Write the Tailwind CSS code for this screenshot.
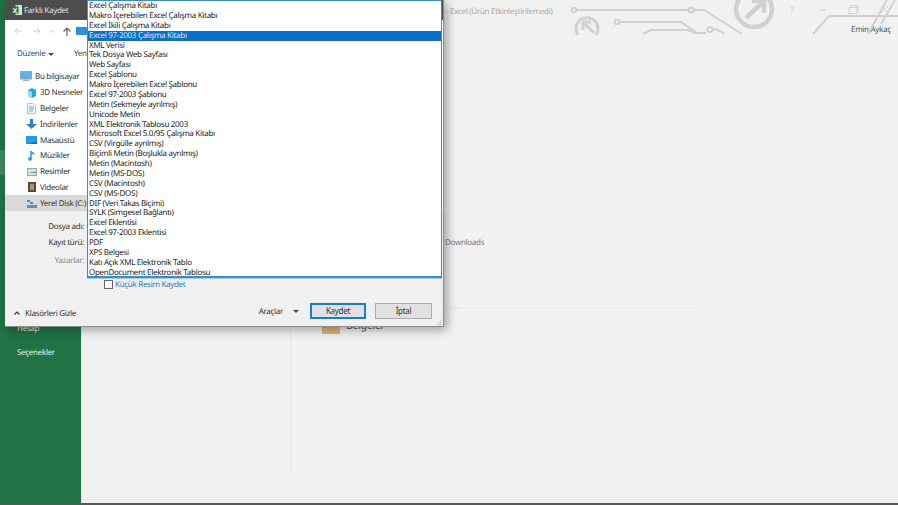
<!DOCTYPE html>
<html lang="tr">
<head>
<meta charset="utf-8">
<script src="https://cdn.jsdelivr.net/npm/@tailwindcss/browser@4"></script>
<title>Farklı Kaydet</title>
</head>
<body class="m-0 overflow-hidden bg-[#f1f1f1] font-['Noto_Sans',sans-serif] text-[8px] tracking-[-0.3px] [text-rendering:geometricPrecision]">
<div class="relative flex flex-col w-[898px] h-[505px] overflow-hidden">
  <div class="flex flex-1 min-h-0">
    <aside class="relative flex flex-col w-[81px] bg-[#217346] text-[#e6efe9] shrink-0">
      <div class="mt-[150px] h-[25px] w-full bg-[#3f8a5e]"></div>
      <div class="mt-[148px] pl-[17px] leading-[12px]">Hesap</div>
      <div class="mt-[12px] pl-[17px] leading-[12px]">Seçenekler</div>
    </aside>
    <main class="relative flex-1 flex flex-col min-w-0 border-l border-[#e6e6e6]">
      <div class="flex h-[60px] items-start">
        <span class="ml-[364px] mt-[6px] leading-[12px] text-[#a9a9a9] whitespace-nowrap">- Excel (Ürün Etkinleştirilemedi)</span>
        <span class="absolute left-[769px] top-[24px] leading-[12px] text-[#555] whitespace-nowrap">Emin Aykaç</span>
      </div>
      <div class="ml-[363px] mt-[176px] pt-[1px] leading-[12px] text-[#7a7a7a]">Downloads</div>
      <div class="flex flex-1 min-h-0">
        <div class="ml-[208px] mt-[59px] w-px h-[168px] bg-[#e8e8e8]"></div>
        <div class="flex flex-col w-[406px] mt-[59px]">
          <div class="h-px w-full bg-[#e8e8e8]"></div>
          <div class="flex items-start gap-[6px] mt-[17px] ml-[31px]">
            <div class="w-[18px] h-[8px] bg-[#dcb877]"></div>
            <span class="text-[10.5px] leading-[14px] text-[#555] -mt-[7px]">Belgeler</span>
          </div>
        </div>
      </div>
    </main>
    <svg class="absolute left-0 top-0 pointer-events-none" width="898" height="60" viewBox="0 0 898 60" fill="none" stroke="#d0d0d0" stroke-width="2">
      <circle cx="574" cy="10" r="2.3"/>
      <path d="M577 10H704L742 34"/>
      <circle cx="691" cy="10" r="2.6" fill="#f1f1f1"/>
      <circle cx="617" cy="22" r="2.3"/>
      <path d="M620 22H681L697 33"/>
      <path d="M643 34L651 30H688L694 33H706"/>
      <circle cx="710" cy="29.5" r="2.6" fill="#f1f1f1"/>
      <path d="M713 29.5H717L725 34"/>
      <path d="M578 35A11 11 0 1 1 596 35" stroke-width="3"/>
      <path d="M583 22L594 33M583 22V30M583 22H591" stroke-width="3"/>
      <circle cx="754" cy="9" r="18" stroke-width="4.5"/>
      <path d="M746 18L763 2M752 1H764V13" stroke-width="4.5"/>
      <path d="M813 34L829 16H898" stroke-width="2"/>
      <path d="M868 34L887 0M881 24L895 0" stroke-width="2"/>
      <path d="M819 10H826" stroke-width="1"/>
      <path d="M849 7.500H857V13.500H849ZM851 7.500V5.500H858V11.500" stroke-width="1"/>
      <path d="M881 6L888 13M888 6L881 13" stroke-width="1"/>
      <text x="790" y="13" fill="#d0d0d0" stroke="none" font-size="9">?</text>
    </svg>
  </div>
  <div class="h-[2px] bg-[#595959] shrink-0"></div>

  <section class="absolute left-[5px] top-0 w-[439px] h-[327px] flex flex-col bg-[#f0f0f0] border-r border-b border-[#8c8c8c] shadow-[3px_3px_10px_rgba(0,0,0,0.35)] text-[#333]">
    <header class="flex items-center h-[20px] bg-[#4d4d4d] text-[#e0e0e0] shrink-0">
      <svg class="ml-[7px]" width="10" height="10" viewBox="0 0 10 10"><rect width="6.500" height="10" x="3.500" fill="#cfe3d6"/><rect y="1.500" width="6.500" height="7" fill="#217346"/><text x="0.800" y="7.500" font-size="6.500" font-weight="700" fill="#fff">X</text></svg>
      <span class="ml-[2px] pt-[1px]">Farklı Kaydet</span>
    </header>
    <div class="flex items-center h-[22px] bg-white shrink-0 pl-[9px]">
      <svg width="8" height="8" viewBox="0 0 8 8" fill="none" stroke="#cfcfcf" stroke-width="1"><path d="M8 4H1M4 1L1 4L4 7"/></svg>
      <svg class="ml-[11px]" width="8" height="8" viewBox="0 0 8 8" fill="none" stroke="#cfcfcf" stroke-width="1"><path d="M0 4H7M4 1L7 4L4 7"/></svg>
      <svg class="ml-[9px]" width="5" height="3" viewBox="0 0 5 3" fill="none" stroke="#cfcfcf"><path d="M0.500 0.500L2.500 2.500L4.500 0.500"/></svg>
      <svg class="ml-[8px]" width="8" height="9" viewBox="0 0 8 9" fill="none" stroke="#666" stroke-width="1.200"><path d="M4 9V1M0.500 4.500L4 1L7.500 4.500"/></svg>
      <div class="w-[11px] h-[8px] bg-[#2b8fe3] ml-[5px]"></div>
    </div>
    <div class="flex items-center h-[24px] bg-white shrink-0 pl-[12px] text-[#2f4f6f]">
      <span class="w-[29px]">Düzenle</span>
      <svg class="ml-[2px]" width="6" height="3" viewBox="0 0 6 3"><path d="M0 0H6L3 3Z" fill="#2f4f6f"/></svg>
      <span class="ml-[20px]">Yeni</span>
    </div>
    <div class="bg-white h-[145px] shrink-0"></div>
    <div class="absolute left-0 top-[69px] w-[82px] flex flex-col text-[#333] [&>div>span:last-child]:pt-[1px]">
      <div class="flex items-center h-[15.800px] pl-[15px] gap-[3px] whitespace-nowrap"><svg width="12" height="11" viewBox="0 0 12 11"><rect x="0.500" y="0.500" width="11" height="7.500" fill="#5fb4e6" stroke="#8aa9c0"/><rect x="3" y="8.500" width="6" height="1.500" fill="#9fb2bf"/></svg><span>Bu bilgisayar</span></div>
      <div class="flex items-center h-[15.800px] pl-[21px] gap-[3px] whitespace-nowrap"><span class="flex justify-center w-[11px]"><svg width="10" height="10" viewBox="0 0 10 10"><path d="M1 2L5 0L9 2V8L5 10L1 8Z" fill="#29a3dd"/><path d="M1 2L5 4V10L1 8Z" fill="#8fd6f2"/></svg></span><span>3D Nesneler</span></div>
      <div class="flex items-center h-[15.800px] pl-[21px] gap-[3px] whitespace-nowrap"><span class="flex justify-center w-[11px]"><svg width="9" height="11" viewBox="0 0 9 11"><path d="M0.500 0.500H6L8.500 3V10.500H0.500Z" fill="#f4f6f8" stroke="#b4bcc4"/><path d="M2 4H7M2 6H7M2 8H6" stroke="#6fa8d6"/></svg></span><span>Belgeler</span></div>
      <div class="flex items-center h-[15.800px] pl-[21px] gap-[3px] whitespace-nowrap"><span class="flex justify-center w-[11px]"><svg width="11" height="10" viewBox="0 0 11 10"><path d="M4 0H7V5H11L5.500 10L0 5H4Z" fill="#2b7fd6"/></svg></span><span>İndirilenler</span></div>
      <div class="flex items-center h-[15.800px] pl-[21px] gap-[3px] whitespace-nowrap"><span class="flex justify-center w-[11px]"><svg width="11" height="8" viewBox="0 0 11 8"><rect width="11" height="8" fill="#1f9be8"/><path d="M3 8H11V5Z" fill="#0d72c2"/></svg></span><span>Masaüstü</span></div>
      <div class="flex items-center h-[15.800px] pl-[21px] gap-[3px] whitespace-nowrap"><span class="flex justify-center w-[11px]"><svg width="8" height="11" viewBox="0 0 8 11"><path d="M3 1V8.500" stroke="#1f9be8" stroke-width="1.500"/><path d="M3 1C5 2 7 3 6.500 6C6 4 4.500 4 3.500 3.500Z" fill="#1f9be8"/><ellipse cx="2" cy="9" rx="2" ry="1.700" fill="#1f9be8"/></svg></span><span>Müzikler</span></div>
      <div class="flex items-center h-[15.800px] pl-[21px] gap-[3px] whitespace-nowrap"><span class="flex justify-center w-[11px]"><svg width="10" height="8" viewBox="0 0 10 8"><rect x="0.500" y="0.500" width="9" height="7" fill="#dbe2e6" stroke="#9aa5ac"/><path d="M1 5L9 3.500V5H1Z" fill="#5f9a7c"/></svg></span><span>Resimler</span></div>
      <div class="flex items-center h-[15.800px] pl-[21px] gap-[3px] whitespace-nowrap"><span class="flex justify-center w-[11px]"><svg width="8" height="10" viewBox="0 0 8 10"><rect width="8" height="10" fill="#4a4f55"/><rect x="2" y="2" width="4" height="6" fill="#c7923f"/></svg></span><span>Videolar</span></div>
      <div class="flex items-center h-[16px] pl-[21px] gap-[3px] whitespace-nowrap bg-[#d9d9d9]"><span class="flex justify-center w-[11px]"><svg width="10" height="9" viewBox="0 0 10 9"><rect y="6" width="10" height="3" fill="#7f8a8f"/><rect x="0" y="1" width="3" height="2" fill="#2b8fe3"/><rect x="3" y="3" width="3" height="2" fill="#2b8fe3"/></svg></span><span>Yerel Disk (C:)</span></div>
    </div>
    <div class="flex flex-col flex-1 min-h-0">
      <div class="flex flex-col flex-1 pl-[9px]">
        <div class="flex justify-end w-[70px] mt-[10px] leading-[12px]">Dosya adı:</div>
        <div class="flex justify-end w-[70px] mt-[4px] leading-[12px]">Kayıt türü:</div>
        <div class="flex justify-end w-[70px] mt-[6px] leading-[12px] text-[#8a8a8a]">Yazarlar:</div>
        <div class="flex items-center ml-[90px] mt-[11px] h-[12px] gap-[2px] text-[#2a7cc7]">
          <span class="w-[9px] h-[9px] border border-[#666] bg-white block"></span>
          <span class="pt-[1px]">Küçük Resim Kaydet</span>
        </div>
      </div>
      <footer class="relative flex items-center h-[24px] mb-[3px] shrink-0">
        <div class="flex items-center mt-[4px]">
          <svg class="ml-[9px]" width="6" height="4" viewBox="0 0 6 4" fill="none" stroke="#333" stroke-width="1.200"><path d="M0.500 3.500L3 1L5.500 3.500"/></svg>
          <span class="ml-[5px] pt-[1px]">Klasörleri Gizle</span>
        </div>
        <div class="ml-auto flex items-center">
          <span class="pt-[1px]">Araçlar</span>
          <svg class="ml-[10px]" width="6" height="3" viewBox="0 0 6 3"><path d="M0 0H6L3 3Z" fill="#444"/></svg>
          <button class="ml-[11px] w-[56px] h-[16px] bg-[#e1e1e1] border-2 border-[#0f7fd8] text-[#333] leading-[12px]">Kaydet</button>
          <button class="ml-[9px] mr-[11px] w-[57px] h-[16px] bg-[#e1e1e1] border border-[#adadad] text-[#333] leading-[12px]">İptal</button>
        </div>
        <svg class="absolute right-[1px] bottom-[-2px]" width="5" height="5" viewBox="0 0 5 5" fill="#b5b5b5"><rect x="3" y="0" width="1" height="1"/><rect x="1.500" y="2" width="1" height="1"/><rect x="3" y="2" width="1" height="1"/><rect x="0" y="4" width="1" height="1"/><rect x="1.500" y="4" width="1" height="1"/><rect x="3" y="4" width="1" height="1"/></svg>
      </footer>
    </div>
    <ul class="absolute left-[82px] top-0 w-[355px] h-[278px] bg-white border border-[#2f8fd8] border-b-2 text-[#222] m-0 p-0 list-none leading-[10.875px] shadow-[0_1px_0_#a9cbe6]">
      <li class="h-[9.875px] pl-[1px] whitespace-nowrap">Excel Çalışma Kitabı</li>
      <li class="h-[9.875px] pl-[1px] whitespace-nowrap">Makro İçerebilen Excel Çalışma Kitabı</li>
      <li class="h-[9.875px] pl-[1px] whitespace-nowrap">Excel İkili Çalışma Kitabı</li>
      <li class="h-[9.875px] pl-[1px] whitespace-nowrap bg-[#0a6fc8] text-[#dbe9f5]">Excel 97-2003 Çalışma Kitabı</li>
      <li class="h-[9.875px] pl-[1px] whitespace-nowrap">XML Verisi</li>
      <li class="h-[9.875px] pl-[1px] whitespace-nowrap">Tek Dosya Web Sayfası</li>
      <li class="h-[9.875px] pl-[1px] whitespace-nowrap">Web Sayfası</li>
      <li class="h-[9.875px] pl-[1px] whitespace-nowrap">Excel Şablonu</li>
      <li class="h-[9.875px] pl-[1px] whitespace-nowrap">Makro İçerebilen Excel Şablonu</li>
      <li class="h-[9.875px] pl-[1px] whitespace-nowrap">Excel 97-2003 Şablonu</li>
      <li class="h-[9.875px] pl-[1px] whitespace-nowrap">Metin (Sekmeyle ayrılmış)</li>
      <li class="h-[9.875px] pl-[1px] whitespace-nowrap">Unicode Metin</li>
      <li class="h-[9.875px] pl-[1px] whitespace-nowrap">XML Elektronik Tablosu 2003</li>
      <li class="h-[9.875px] pl-[1px] whitespace-nowrap">Microsoft Excel 5.0/95 Çalışma Kitabı</li>
      <li class="h-[9.875px] pl-[1px] whitespace-nowrap">CSV (Virgülle ayrılmış)</li>
      <li class="h-[9.875px] pl-[1px] whitespace-nowrap">Biçimli Metin (Boşlukla ayrılmış)</li>
      <li class="h-[9.875px] pl-[1px] whitespace-nowrap">Metin (Macintosh)</li>
      <li class="h-[9.875px] pl-[1px] whitespace-nowrap">Metin (MS-DOS)</li>
      <li class="h-[9.875px] pl-[1px] whitespace-nowrap">CSV (Macintosh)</li>
      <li class="h-[9.875px] pl-[1px] whitespace-nowrap">CSV (MS-DOS)</li>
      <li class="h-[9.875px] pl-[1px] whitespace-nowrap">DIF (Veri Takas Biçimi)</li>
      <li class="h-[9.875px] pl-[1px] whitespace-nowrap">SYLK (Simgesel Bağlantı)</li>
      <li class="h-[9.875px] pl-[1px] whitespace-nowrap">Excel Eklentisi</li>
      <li class="h-[9.875px] pl-[1px] whitespace-nowrap">Excel 97-2003 Eklentisi</li>
      <li class="h-[9.875px] pl-[1px] whitespace-nowrap">PDF</li>
      <li class="h-[9.875px] pl-[1px] whitespace-nowrap">XPS Belgesi</li>
      <li class="h-[9.875px] pl-[1px] whitespace-nowrap">Katı Açık XML Elektronik Tablo</li>
      <li class="h-[9.875px] pl-[1px] whitespace-nowrap">OpenDocument Elektronik Tablosu</li>
    </ul>
  </section>
</div>
</body>
</html>
